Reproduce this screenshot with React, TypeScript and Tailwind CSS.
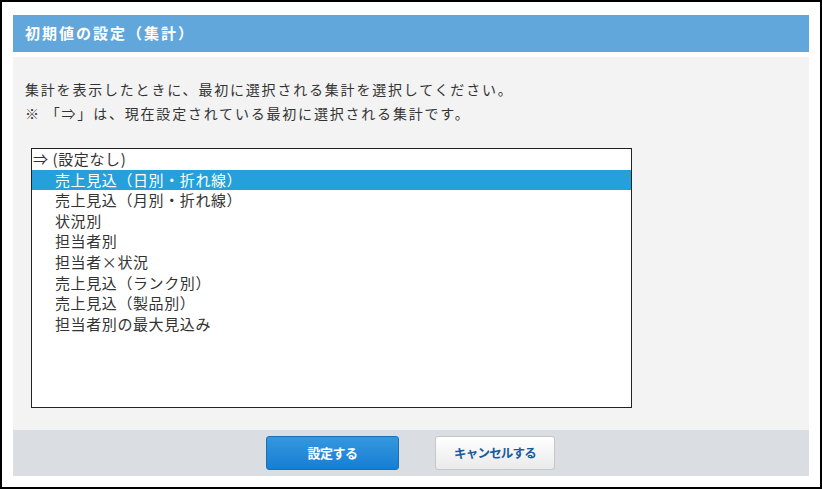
const items = [
  '売上見込（日別・折れ線）',
  '売上見込（月別・折れ線）',
  '状況別',
  '担当者別',
  '担当者×状況',
  '売上見込（ランク別）',
  '売上見込（製品別）',
  '担当者別の最大見込み',
];

export default function App() {
  return (
    <div
      className="w-[822px] h-[489px] bg-white border-2 border-black px-[11px] pt-[13px] text-[#333]"
      style={{ fontFamily: '"Noto Sans CJK JP", "Noto Sans", sans-serif' }}
    >
      <div className="h-[37px] bg-[#62a7dc] flex items-center pl-[12px] text-white font-bold text-[15px] tracking-[2px]">
        初期値の設定（集計）
      </div>
      <div className="mt-[5px] bg-[#f3f3f3] h-[373px] pt-[20px] pl-[12px]">
        <p className="text-[14px] leading-[24px] tracking-[1.8px]">集計を表示したときに、最初に選択される集計を選択してください。</p>
        <p className="text-[14px] leading-[24px] tracking-[1.8px]">※ 「⇒」は、現在設定されている最初に選択される集計です。</p>
        <div className="mt-[23px] ml-[6px] w-[601px] h-[260px] bg-white border border-[#222] text-[15px] leading-[20.6px] tracking-[0.6px]">
          <div className="pl-[1px]">⇒ (設定なし)</div>
          {items.map((t, i) => (
            <div key={t} className={i === 0 ? 'bg-[#26a0da] text-white pl-[23px]' : 'pl-[23px]'}>
              {t}
            </div>
          ))}
        </div>
      </div>
      <div className="h-[46px] bg-[#dadde1] flex items-center justify-center gap-[36px] pr-[1px]">
        <button className="w-[133px] h-[34px] rounded-[3px] border border-[#1c6fb6] bg-gradient-to-b from-[#3597dd] to-[#157ed5] text-white font-bold text-[13px] tracking-[-0.5px]">
          設定する
        </button>
        <button className="w-[120px] h-[34px] rounded-[3px] border border-[#c6c6c6] bg-gradient-to-b from-white to-[#eaeaea] text-[#1a5a9e] font-bold text-[12.5px] tracking-[-0.8px]">
          キャンセルする
        </button>
      </div>
    </div>
  );
}
